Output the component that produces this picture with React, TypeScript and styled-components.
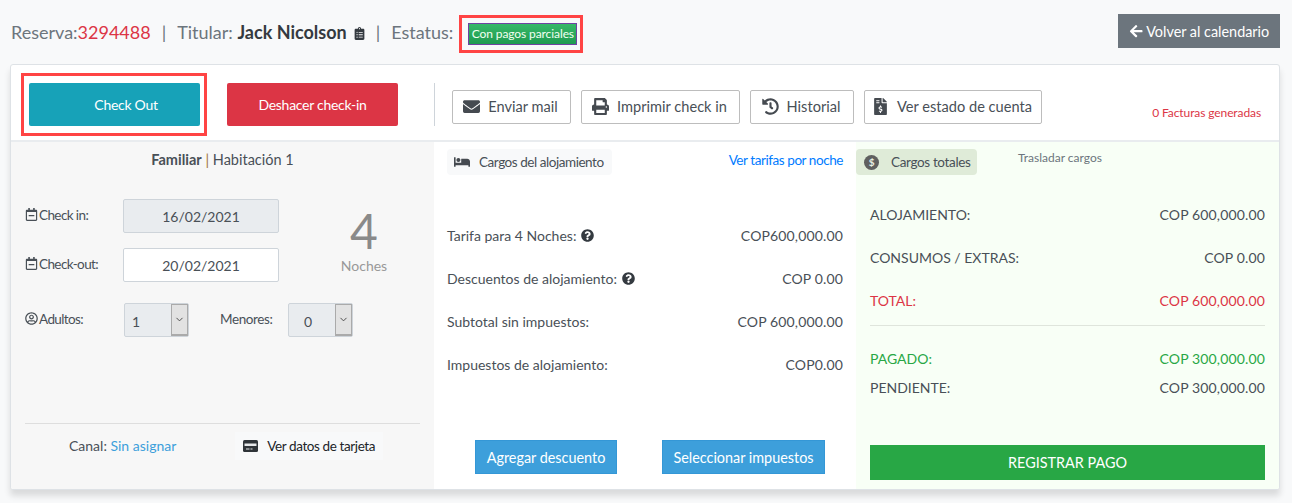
import styled, { createGlobalStyle } from 'styled-components';
import {
  FaArrowLeft,
  FaBed,
  FaClipboardList,
  FaEnvelope,
  FaFileInvoiceDollar,
  FaHistory,
  FaPrint,
  FaQuestionCircle,
  FaRegCalendarMinus,
  FaRegUserCircle,
} from 'react-icons/fa';
import { FiChevronDown } from 'react-icons/fi';

const GlobalStyle = createGlobalStyle`
  * {
    box-sizing: border-box;
  }
  body {
    margin: 0;
    background: #f8f9fa;
    font-family: Lato, "Liberation Sans", sans-serif;
    font-size: 14px;
    color: #495057;
  }
`;

const Page = styled.div`
  width: 1292px;
  height: 503px;
  padding: 0 12px 0 10px;
  overflow: hidden;
`;

const Header = styled.header`
  height: 64px;
  display: flex;
  align-items: flex-start;
  justify-content: space-between;
  padding-left: 1px;
`;

const Summary = styled.div`
  display: flex;
  align-items: flex-start;
  margin-top: 15px;
  font-size: 18px;
  line-height: 35px;
  color: #6c757d;
  white-space: pre;
  svg {
    font-size: 13px;
    color: #343a40;
    margin: 12px -1px 0 6px;
  }
`;

const ReservationNumber = styled.span`
  color: #dc3545;
`;

const HolderName = styled.strong`
  color: #343a40;
  font-weight: 700;
`;

const Separator = styled.span`
  margin: 0 11px;
`;

const Highlight = styled.div`
  border: 3px solid #f44;
  display: flex;
  flex-shrink: 0;
`;

const StatusFrame = styled(Highlight)`
  margin-left: 6px;
  padding: 5px 3px 5px 6px;
`;

const StatusBadge = styled.span`
  background: linear-gradient(#36b868, #1f9a50);
  border: 1px solid #6f42a1;
  color: #f2fff2;
  font-size: 12px;
  letter-spacing: -0.1px;
  line-height: 20px;
  height: 22px;
  width: 109px;
  text-align: center;
`;

const BackButton = styled.button`
  margin-top: 14px;
  width: 162px;
  height: 34px;
  border: 0;
  background: #6c757d;
  color: #fff;
  font: inherit;
  font-size: 14.4px;
  display: flex;
  align-items: center;
  justify-content: center;
  gap: 3px;
`;

const Card = styled.main`
  height: 426px;
  background: #fff;
  border: 1px solid #dee2e6;
  border-radius: 3px;
  box-shadow: 0 6px 6px rgba(0, 0, 0, 0.12);
  overflow: hidden;
`;

const Toolbar = styled.div`
  height: 77px;
  display: flex;
  align-items: flex-start;
  padding-left: 10px;
  border-bottom: 2px solid #e9ecef;
`;

const CheckOutFrame = styled(Highlight)`
  margin-top: 8px;
  padding: 7px 4px 7px 5px;
`;

const MainButton = styled.button<{ $color: string }>`
  width: 171px;
  height: 43px;
  border: 0;
  border-radius: 2px;
  background: ${(props) => props.$color};
  color: #fff;
  font: inherit;
  font-size: 14px;
  letter-spacing: -0.28px;
`;

const CheckOutButton = styled(MainButton)`
  padding-left: 29px;
`;

const UndoButton = styled(MainButton)`
  margin: 18px 0 0 20px;
`;

const ToolbarDivider = styled.div`
  width: 1px;
  height: 43px;
  margin: 18px 17px 0 36px;
  background: #ced4da;
`;

const ActionGroup = styled.div`
  display: flex;
  gap: 10px;
  margin-top: 25px;
`;

const ActionButton = styled.button<{ $width: number }>`
  width: ${(props) => props.$width}px;
  height: 34px;
  display: flex;
  align-items: center;
  justify-content: center;
  gap: 8px;
  padding: 0 2px 1px 0;
  background: #fff;
  border: 1px solid #bdbdbd;
  border-radius: 2px;
  color: #495057;
  font: inherit;
  font-size: 14.6px;
  svg {
    font-size: 17px;
    color: #454a50;
  }
`;

const InvoiceCount = styled.span`
  margin: 40px 18px 0 auto;
  font-size: 12px;
  letter-spacing: -0.1px;
  color: #dc3545;
`;

const Columns = styled.div`
  display: grid;
  grid-template-columns: 423px 422px 1fr;
  height: 347px;
`;

const StayPanel = styled.section`
  background: #f7f7f7;
  display: flex;
  flex-direction: column;
  padding: 8px 14px 0 14px;
`;

const RoomTitle = styled.div`
  text-align: center;
  height: 20px;
  line-height: 20px;
  font-size: 14.5px;
  color: #495057;
  strong {
    font-weight: 700;
  }
  span {
    color: #a0743f;
  }
`;

const StayForm = styled.div`
  display: flex;
  margin-top: 29px;
`;

const DateFields = styled.div`
  display: flex;
  flex-direction: column;
  gap: 15px;
`;

const DateRow = styled.label`
  display: flex;
  align-items: center;
  height: 34px;
`;

const FieldLabel = styled.span<{ $width?: number }>`
  display: flex;
  align-items: center;
  width: ${(props) => props.$width ?? 98}px;
  margin-bottom: 3px;
  font-size: 13.5px;
  letter-spacing: -0.6px;
  color: #495057;
  svg {
    font-size: 13px;
    color: #495057;
    margin-right: 1px;
  }
`;

const DateInput = styled.input`
  width: 156px;
  height: 34px;
  padding: 0;
  text-align: center;
  border: 1px solid #ced4da;
  border-radius: 2px;
  background: #fff;
  color: #495057;
  font: inherit;
  &:read-only {
    background: #e9ecef;
  }
`;

const NightCount = styled.div`
  flex: 1;
  display: flex;
  flex-direction: column;
  align-items: center;
  margin: 6px 0 0 29px;
  color: #999;
`;

const NightNumber = styled.span`
  font-size: 48px;
  line-height: 52px;
  color: #8a8a8a;
`;

const GuestRow = styled.div`
  display: flex;
  align-items: center;
  height: 34px;
  margin-top: 21px;
`;

const FakeSelect = styled.div`
  width: 65px;
  height: 34px;
  display: flex;
  background: #e9ecef;
  border: 1px solid #ced4da;
  border-radius: 2px;
  font-size: 14px;
`;

const SelectValue = styled.span<{ $center?: boolean }>`
  flex: 1;
  display: flex;
  align-items: center;
  padding-top: 3px;
  padding-left: ${(props) => (props.$center ? 15 : 7)}px;
`;

const SelectArrow = styled.span`
  width: 17px;
  display: flex;
  align-items: center;
  justify-content: center;
  background: #e2e2e2;
  border: 1px solid #aaa;
  border-bottom-width: 2px;
  svg {
    font-size: 11px;
    color: #444;
  }
`;

const MinorsLabel = styled.span`
  width: 68px;
  margin: 0 0 3px 31px;
  font-size: 13.5px;
  letter-spacing: -0.4px;
`;

const StayFooter = styled.div`
  margin-top: auto;
  height: 66px;
  border-top: 1px solid #dedede;
  display: flex;
  align-items: flex-start;
  padding-left: 44px;
`;

const Channel = styled.span`
  margin-top: 13px;
  font-size: 14px;
  a {
    color: #3d9fdb;
  }
`;

const CardChip = styled.span`
  margin: 8px 0 0 59px;
  width: 148px;
  height: 28px;
  display: flex;
  align-items: center;
  gap: 9px;
  padding-left: 8px;
  background: #f8f9fa;
  color: #212529;
  font-size: 13.5px;
  letter-spacing: -0.4px;
  white-space: nowrap;
`;

const RatesPanel = styled.section`
  display: flex;
  flex-direction: column;
  padding: 7px 13px 0 13px;
`;

const RatesHeader = styled.div`
  display: flex;
  justify-content: space-between;
  align-items: flex-start;
`;

const TabChip = styled.div<{ $background: string }>`
  display: flex;
  align-items: center;
  height: 26px;
  border-radius: 4px;
  background: ${(props) => props.$background};
  font-size: 13.5px;
  color: #495057;
  white-space: nowrap;
`;

const RoomChip = styled(TabChip)`
  width: 165px;
  gap: 9px;
  padding-left: 7px;
  letter-spacing: -0.45px;
  svg {
    font-size: 16px;
    color: #454a50;
  }
`;

const RatesLink = styled.a`
  margin-top: 3px;
  font-size: 13.5px;
  letter-spacing: -0.43px;
  color: #007bff;
`;

const RateList = styled.div`
  margin-top: 50px;
  display: flex;
  flex-direction: column;
  gap: 23px;
`;

const AmountRow = styled.div<{ $color?: string }>`
  display: flex;
  justify-content: space-between;
  align-items: center;
  height: 20px;
  color: ${(props) => props.$color ?? '#495057'};
`;

const AmountValue = styled.span`
  letter-spacing: 0.15px;
`;

const RowLabel = styled.span`
  display: flex;
  align-items: center;
  gap: 5px;
  svg {
    font-size: 13px;
    color: #343a40;
  }
`;

const RateActions = styled.div`
  margin-top: auto;
  margin-bottom: 15px;
  padding-left: 10px;
  display: flex;
  justify-content: center;
  gap: 45px;
`;

const BlueButton = styled.button<{ $width: number }>`
  width: ${(props) => props.$width}px;
  height: 34px;
  padding: 0;
  border: 1px solid #3497d6;
  background: #3d9fdb;
  color: #fff;
  font: inherit;
  font-size: 14.4px;
`;

const TotalsPanel = styled.section`
  background: #f8fff6;
  display: flex;
  flex-direction: column;
  padding: 7px 14px 0 14px;
`;

const TotalsHeader = styled.div`
  display: flex;
  align-items: flex-start;
  margin-left: -14px;
`;

const TotalsChip = styled(TabChip)`
  width: 121px;
  gap: 12px;
  padding-left: 8px;
  letter-spacing: -0.35px;
`;

const DollarIcon = styled.span`
  width: 15px;
  height: 15px;
  border-radius: 50%;
  background: #5f5f5f;
  color: #e8efe4;
  font-size: 10px;
  font-weight: 700;
  line-height: 15px;
  text-align: center;
`;

const MoveCharges = styled.span`
  margin: 1px 0 0 41px;
  font-size: 12px;
  color: #6c757d;
`;

const TotalsList = styled.div`
  margin-top: 29px;
  display: flex;
  flex-direction: column;
  gap: 23px;
`;

const TotalsDivider = styled.hr`
  margin: 15px 0 22px;
  border: 0;
  border-top: 1px solid #dfe5dc;
`;

const PaidList = styled.div`
  display: flex;
  flex-direction: column;
  gap: 9px;
`;

const PayButton = styled.button`
  margin-top: auto;
  margin-bottom: 9px;
  height: 35px;
  border: 0;
  background: #28a745;
  color: #fff;
  font: inherit;
  font-size: 14.4px;
`;

const CardIcon = () => (
  <svg width="15" height="12" viewBox="0 0 15 12">
    <rect width="15" height="12" rx="1.5" fill="#2f3439" />
    <rect x="1.5" y="3.5" width="12" height="2.5" fill="#e6e8ea" />
    <rect x="3" y="8.5" width="3.5" height="1" fill="#e6e8ea" />
    <rect x="7.5" y="8.5" width="2" height="1" fill="#e6e8ea" />
  </svg>
);

export default function App() {
  return (
    <Page>
      <GlobalStyle />
      <Header>
        <Summary>
          Reserva:<ReservationNumber>3294488</ReservationNumber>
          <Separator>|</Separator>
          Titular: <HolderName>Jack Nicolson</HolderName>
          <FaClipboardList />
          <Separator>|</Separator>
          Estatus:
          <StatusFrame>
            <StatusBadge>Con pagos parciales</StatusBadge>
          </StatusFrame>
        </Summary>
        <BackButton>
          <FaArrowLeft /> Volver al calendario
        </BackButton>
      </Header>
      <Card>
        <Toolbar>
          <CheckOutFrame>
            <CheckOutButton $color="#17a2b8">Check Out</CheckOutButton>
          </CheckOutFrame>
          <UndoButton $color="#dc3545">Deshacer check-in</UndoButton>
          <ToolbarDivider />
          <ActionGroup>
            <ActionButton $width={119}>
              <FaEnvelope /> Enviar mail
            </ActionButton>
            <ActionButton $width={159}>
              <FaPrint /> Imprimir check in
            </ActionButton>
            <ActionButton $width={104}>
              <FaHistory /> Historial
            </ActionButton>
            <ActionButton $width={178}>
              <FaFileInvoiceDollar /> Ver estado de cuenta
            </ActionButton>
          </ActionGroup>
          <InvoiceCount>0 Facturas generadas</InvoiceCount>
        </Toolbar>
        <Columns>
          <StayPanel>
            <RoomTitle>
              <strong>Familiar</strong> <span>|</span> Habitación 1
            </RoomTitle>
            <StayForm>
              <DateFields>
                <DateRow>
                  <FieldLabel>
                    <FaRegCalendarMinus /> Check in:
                  </FieldLabel>
                  <DateInput value="16/02/2021" readOnly />
                </DateRow>
                <DateRow>
                  <FieldLabel>
                    <FaRegCalendarMinus /> Check-out:
                  </FieldLabel>
                  <DateInput defaultValue="20/02/2021" />
                </DateRow>
              </DateFields>
              <NightCount>
                <NightNumber>4</NightNumber>
                Noches
              </NightCount>
            </StayForm>
            <GuestRow>
              <FieldLabel $width={99}>
                <FaRegUserCircle /> Adultos:
              </FieldLabel>
              <FakeSelect>
                <SelectValue>1</SelectValue>
                <SelectArrow>
                  <FiChevronDown />
                </SelectArrow>
              </FakeSelect>
              <MinorsLabel>Menores:</MinorsLabel>
              <FakeSelect>
                <SelectValue $center>0</SelectValue>
                <SelectArrow>
                  <FiChevronDown />
                </SelectArrow>
              </FakeSelect>
            </GuestRow>
            <StayFooter>
              <Channel>
                Canal: <a>Sin asignar</a>
              </Channel>
              <CardChip>
                <CardIcon /> Ver datos de tarjeta
              </CardChip>
            </StayFooter>
          </StayPanel>
          <RatesPanel>
            <RatesHeader>
              <RoomChip $background="#f8f9fa">
                <FaBed /> Cargos del alojamiento
              </RoomChip>
              <RatesLink>Ver tarifas por noche</RatesLink>
            </RatesHeader>
            <RateList>
              <AmountRow>
                <RowLabel>
                  Tarifa para 4 Noches: <FaQuestionCircle />
                </RowLabel>
                <AmountValue>COP600,000.00</AmountValue>
              </AmountRow>
              <AmountRow>
                <RowLabel>
                  Descuentos de alojamiento: <FaQuestionCircle />
                </RowLabel>
                <AmountValue>COP 0.00</AmountValue>
              </AmountRow>
              <AmountRow>
                <RowLabel>Subtotal sin impuestos:</RowLabel>
                <AmountValue>COP 600,000.00</AmountValue>
              </AmountRow>
              <AmountRow>
                <RowLabel>Impuestos de alojamiento:</RowLabel>
                <AmountValue>COP0.00</AmountValue>
              </AmountRow>
            </RateList>
            <RateActions>
              <BlueButton $width={142}>Agregar descuento</BlueButton>
              <BlueButton $width={163}>Seleccionar impuestos</BlueButton>
            </RateActions>
          </RatesPanel>
          <TotalsPanel>
            <TotalsHeader>
              <TotalsChip $background="#dfebd8">
                <DollarIcon>$</DollarIcon> Cargos totales
              </TotalsChip>
              <MoveCharges>Trasladar cargos</MoveCharges>
            </TotalsHeader>
            <TotalsList>
              <AmountRow>
                <span>ALOJAMIENTO:</span>
                <AmountValue>COP 600,000.00</AmountValue>
              </AmountRow>
              <AmountRow>
                <span>CONSUMOS / EXTRAS:</span>
                <AmountValue>COP 0.00</AmountValue>
              </AmountRow>
              <AmountRow $color="#dc3545">
                <span>TOTAL:</span>
                <AmountValue>COP 600,000.00</AmountValue>
              </AmountRow>
            </TotalsList>
            <TotalsDivider />
            <PaidList>
              <AmountRow $color="#28a745">
                <span>PAGADO:</span>
                <AmountValue>COP 300,000.00</AmountValue>
              </AmountRow>
              <AmountRow>
                <span>PENDIENTE:</span>
                <AmountValue>COP 300,000.00</AmountValue>
              </AmountRow>
            </PaidList>
            <PayButton>REGISTRAR PAGO</PayButton>
          </TotalsPanel>
        </Columns>
      </Card>
    </Page>
  );
}
